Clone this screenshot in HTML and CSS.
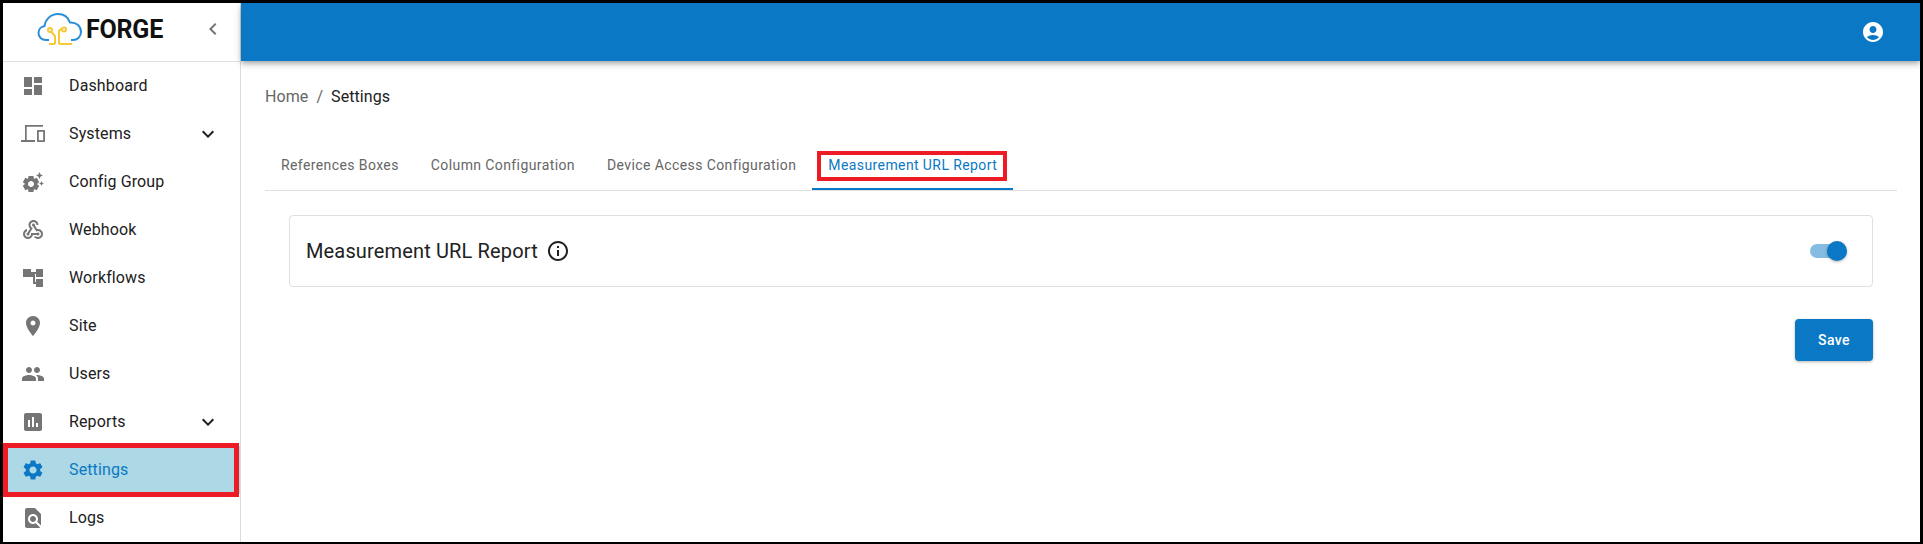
FILE: index.html
```html
<!DOCTYPE html>
<html lang="en">
<head>
<meta charset="utf-8">
<title>Forge Settings</title>
<link rel="stylesheet" href="styles.css">
</head>
<body>
<div class="frame">
  <aside class="sidebar">
    <div class="brand">
      <div class="logo">
        <svg class="logo-mark" viewBox="35 10 50 38" width="50" height="38">
          <path class="cloud" d="M49 40H46C41.500 40 38.500 37 38.500 33C38.500 29.500 41 26.500 44.500 26C45.500 19 51 14 58 14C63.500 14 68 17 70 22.500C76 22 81 26 81 32C81 36.500 77.500 40 73 40H71"/>
          <path class="circuit" d="M55 44V36L51.500 32M59 44V31l2-2h1M49 44H55M59 44H72"/>
          <circle class="circuit" cx="50" cy="30" r="2"/>
          <circle class="circuit" cx="64" cy="29.500" r="2"/>
        </svg>
        <span class="logo-text">FORGE</span>
      </div>
      <svg class="icon collapse" viewBox="0 0 24 24"><path d="M15.410 7.410 14 6l-6 6 6 6 1.410-1.410L10.830 12z"/></svg>
    </div>
    <nav class="menu">
      <a class="item"><svg class="icon" viewBox="0 0 24 24"><path d="M3 13h8V3H3v10zm0 8h8v-6H3v6zm10 0h8V11h-8v10zm0-18v6h8V3h-8z"/></svg><span class="label">Dashboard</span></a>
      <a class="item"><svg class="icon" viewBox="0 0 24 24"><path d="M4 3h18v1.700H5.700V18H14v2H0v-2h4V3z"/><path d="M17 8h6c.55 0 1 .45 1 1v10c0 .55-.45 1-1 1h-6c-.55 0-1-.45-1-1V9c0-.55.45-1 1-1zm.8 1.800v8.400h4.400V9.800z"/></svg><span class="label">Systems</span><svg class="icon chevron" viewBox="0 0 24 24"><path d="M16.590 8.590 12 13.170 7.410 8.590 6 10l6 6 6-6z"/></svg></a>
      <a class="item"><svg class="icon" viewBox="0 0 24 24"><path d="M17.410 6.590 15 5.500l2.410-1.090L18.500 2l1.090 2.410L22 5.500l-2.410 1.090L18.500 9l-1.090-2.410zm3.870 6.130L20.500 11l-.78 1.720-1.720.78 1.720.78.78 1.720.78-1.720L23 13.500l-1.720-.78zm-5.040 1.650 1.940 1.470-2.500 4.330-2.240-.94c-.2.13-.42.26-.64.37l-.3 2.400h-5l-.3-2.410c-.22-.11-.43-.23-.64-.37l-2.240.94-2.500-4.330 1.940-1.470c-.01-.11-.01-.24-.01-.37s0-.26.01-.38l-1.940-1.470 2.500-4.330 2.240.94c.2-.13.42-.26.64-.37L7.500 6h5l.3 2.410c.22.11.43.23.64.37l2.240-.94 2.500 4.330-1.940 1.470c.01.12.01.24.01.37s0 .24-.01.36zM13 14c0-1.660-1.340-3-3-3s-3 1.340-3 3 1.340 3 3 3 3-1.340 3-3z"/></svg><span class="label">Config Group</span></a>
      <a class="item"><svg class="icon" viewBox="0 0 24 24"><path d="M10 15h5.880c.27-.31.67-.5 1.120-.5.83 0 1.500.67 1.500 1.500s-.67 1.500-1.500 1.500c-.44 0-.84-.19-1.120-.5H11.900c-.46 2.280-2.480 4-4.900 4-2.760 0-5-2.240-5-5 0-2.420 1.720-4.440 4-4.900v2.070c-1.160.41-2 1.530-2 2.830 0 1.650 1.350 3 3 3s3-1.350 3-3v-1zm2.500-11c1.650 0 3 1.350 3 3h2c0-2.760-2.240-5-5-5s-5 2.240-5 5c0 1.430.6 2.710 1.550 3.620l-2.350 3.900c-.68.14-1.200.75-1.200 1.480 0 .83.67 1.500 1.500 1.500s1.500-.67 1.500-1.500c0-.16-.02-.31-.07-.45l3.380-5.630C10.490 9.610 9.500 8.420 9.500 7c0-1.650 1.350-3 3-3zm4.500 9c-.64 0-1.230.2-1.720.54l-3.050-5.070C11.530 8.350 11 7.740 11 7c0-.83.67-1.500 1.500-1.500S14 6.170 14 7c0 .15-.02.29-.06.43l2.190 3.650c.28-.05.57-.08.87-.08 2.760 0 5 2.240 5 5s-2.240 5-5 5c-1.850 0-3.470-1.010-4.330-2.500h2.670c.48.32 1.050.5 1.660.5 1.650 0 3-1.350 3-3s-1.350-3-3-3z"/></svg><span class="label">Webhook</span></a>
      <a class="item"><svg class="icon" viewBox="0 0 24 24"><path d="M2 3h8v3h5V3h7v8h-7V8h-1v8h1v-3h7v8h-7v-3h-3V11h-2v0H2V3z"/></svg><span class="label">Workflows</span></a>
      <a class="item"><svg class="icon" viewBox="0 0 24 24"><path d="M12 2C8.130 2 5 5.130 5 9c0 5.250 7 13 7 13s7-7.750 7-13c0-3.870-3.130-7-7-7zm0 9.500c-1.380 0-2.500-1.120-2.500-2.500s1.120-2.500 2.500-2.500 2.500 1.120 2.500 2.500-1.120 2.500-2.500 2.500z"/></svg><span class="label">Site</span></a>
      <a class="item"><svg class="icon" viewBox="0 0 24 24"><path d="M16 11c1.660 0 2.990-1.340 2.990-3S17.660 5 16 5c-1.660 0-3 1.340-3 3s1.340 3 3 3zm-8 0c1.660 0 2.990-1.340 2.990-3S9.660 5 8 5C6.340 5 5 6.340 5 8s1.340 3 3 3zm0 2c-2.330 0-7 1.170-7 3.500V19h14v-2.500c0-2.330-4.670-3.500-7-3.500zm8 0c-.29 0-.62.02-.97.05 1.160.84 1.970 1.970 1.970 3.450V19h6v-2.500c0-2.330-4.670-3.500-7-3.500z"/></svg><span class="label">Users</span></a>
      <a class="item"><svg class="icon" viewBox="0 0 24 24"><path d="M19 3H5c-1.100 0-2 .9-2 2v14c0 1.100.9 2 2 2h14c1.100 0 2-.9 2-2V5c0-1.100-.9-2-2-2zM9 17H7v-7h2v7zm4 0h-2V7h2v10zm4 0h-2v-4h2v4z"/></svg><span class="label">Reports</span><svg class="icon chevron" viewBox="0 0 24 24"><path d="M16.590 8.590 12 13.170 7.410 8.590 6 10l6 6 6-6z"/></svg></a>
      <a class="item active"><svg class="icon" viewBox="0 0 24 24"><path d="M19.140 12.940c.04-.3.06-.61.06-.94 0-.32-.02-.64-.07-.94l2.030-1.580c.18-.14.23-.41.12-.61l-1.920-3.320c-.12-.22-.37-.29-.59-.22l-2.390.96c-.5-.38-1.030-.7-1.620-.94l-.36-2.540c-.04-.24-.24-.41-.48-.41h-3.840c-.24 0-.43.17-.47.41l-.36 2.540c-.59.24-1.130.57-1.620.94l-2.390-.96c-.22-.08-.47 0-.59.22L2.740 8.870c-.12.21-.08.47.12.61l2.030 1.580c-.05.3-.09.63-.09.94s.02.64.07.94l-2.030 1.580c-.18.14-.23.41-.12.61l1.920 3.320c.12.22.37.29.59.22l2.390-.96c.5.38 1.030.7 1.620.94l.36 2.540c.05.24.24.41.48.41h3.840c.24 0 .44-.17.47-.41l.36-2.540c.59-.24 1.130-.56 1.620-.94l2.390.96c.22.08.47 0 .59-.22l1.920-3.320c.12-.22.07-.47-.12-.61l-2.010-1.580zM12 15.600c-1.980 0-3.600-1.620-3.600-3.600s1.620-3.600 3.600-3.600 3.600 1.620 3.600 3.600-1.620 3.600-3.600 3.600z"/></svg><span class="label">Settings</span></a>
      <a class="item"><svg class="icon" viewBox="0 0 24 24"><path d="M20 19.590V8l-6-6H6c-1.100 0-1.990.9-1.990 2L4 20c0 1.100.89 2 1.990 2H18c.45 0 .85-.15 1.190-.4l-4.430-4.430c-.8.52-1.740.83-2.760.83-2.760 0-5-2.240-5-5s2.240-5 5-5 5 2.240 5 5c0 1.020-.31 1.960-.83 2.750L20 19.590zM9 13c0 1.660 1.340 3 3 3s3-1.340 3-3-1.340-3-3-3-3 1.340-3 3z"/></svg><span class="label">Logs</span></a>
    </nav>
  </aside>
  <div class="main">
    <header class="topbar">
      <svg class="icon account" viewBox="0 0 24 24"><path d="M12 2C6.480 2 2 6.480 2 12s4.480 10 10 10 10-4.480 10-10S17.520 2 12 2zm0 4c1.930 0 3.500 1.570 3.500 3.500S13.930 13 12 13s-3.500-1.570-3.500-3.500S10.070 6 12 6zm0 14c-2.030 0-4.430-.82-6.140-2.880C7.550 15.800 9.680 15 12 15s4.450.8 6.140 2.120C16.430 19.180 14.030 20 12 20z"/></svg>
    </header>
    <div class="content">
      <div class="crumbs"><span class="crumb-link">Home</span><span class="crumb-sep">/</span><span class="crumb-current">Settings</span></div>
      <div class="tabs">
        <div class="tab">References Boxes</div>
        <div class="tab">Column Configuration</div>
        <div class="tab">Device Access Configuration</div>
        <div class="tab selected">Measurement URL Report</div>
      </div>
      <div class="panel-wrap">
        <section class="card">
          <div class="card-title"><span>Measurement URL Report</span>
            <svg class="icon info" viewBox="0 0 24 24"><path d="M11 7h2v2h-2zm0 4h2v6h-2zm1-9C6.480 2 2 6.480 2 12s4.480 10 10 10 10-4.480 10-10S17.520 2 12 2zm0 18c-4.410 0-8-3.590-8-8s3.590-8 8-8 8 3.590 8 8-3.590 8-8 8z"/></svg>
          </div>
          <div class="switch"><span class="track"></span><span class="thumb"></span></div>
        </section>
        <div class="actions"><button class="save">Save</button></div>
      </div>
    </div>
  </div>
</div>
</body>
</html>
```

FILE: styles.css
```css
*, *::before, *::after { box-sizing: border-box; }
html, body { margin: 0; padding: 0; }
body {
  font-family: Roboto, "Liberation Sans", sans-serif;
  background: #fff;
  color: #212121;
}
.frame {
  width: 1923px;
  height: 544px;
  border: solid #000;
  border-width: 3px 3px 2px 3px;
  display: flex;
  overflow: hidden;
  background: #fff;
}
.sidebar {
  width: 238px;
  flex: none;
  border-right: 1px solid #dcdcdc;
  display: flex;
  flex-direction: column;
}
.brand {
  height: 59px;
  flex: none;
  border-bottom: 1px solid #e0e0e0;
  display: flex;
  align-items: center;
  padding: 0 15px 6px 32px;
  justify-content: space-between;
}
.logo { display: flex; align-items: center; }
.logo-mark { display: block; }
.cloud { fill: none; stroke: #2b8fd6; stroke-width: 2; }
.circuit { fill: none; stroke: #f7c936; stroke-width: 2; }
.logo-text {
  font-size: 25px;
  font-weight: 700;
  letter-spacing: -.2px;
  color: #111;
  line-height: 1;
  margin-left: 1px;
}
.icon { width: 24px; height: 24px; fill: #757575; display: block; flex: none; }
.menu { display: flex; flex-direction: column; }
.item {
  height: 48px;
  flex: none;
  display: flex;
  align-items: center;
  padding: 0 20px 0 18px;
  font-size: 16px;
  letter-spacing: .13px;
  color: #212121;
  position: relative;
}
.label { margin-left: 24px; flex: 1; padding-bottom: 2px; }
.chevron { fill: #212121; }
.item.active { background: #add8e6; color: #0a78c4; }
.item.active .icon { fill: #0a78c4; }
.item.active::after {
  content: "";
  position: absolute;
  left: 0;
  right: 1px;
  top: -3px;
  bottom: -3px;
  border: 5px solid #ed1c24;
}
.main { flex: 1; min-width: 0; display: flex; flex-direction: column; }
.topbar {
  height: 58px;
  flex: none;
  background: #0a78c4;
  display: flex;
  align-items: center;
  justify-content: flex-end;
  padding-right: 35px;
  box-shadow: 0 2px 4px -1px rgba(0,0,0,.2), 0 4px 5px rgba(0,0,0,.14), 0 1px 10px rgba(0,0,0,.12);
}
.account { fill: #fff; }
.content { flex: 1; padding: 24px 23px 0 24px; }
.crumbs { display: flex; align-items: center; font-size: 16px; letter-spacing: .08px; line-height: 24px; height: 24px; }
.crumb-link { color: #666; }
.crumb-sep { color: #666; margin: 0 8px; }
.crumb-current { color: #212121; }
.tabs {
  display: flex;
  margin-top: 33px;
  height: 49px;
  border-bottom: 1px solid #e0e0e0;
}
.tab {
  height: 48px;
  padding: 0 16px 2px;
  display: flex;
  align-items: center;
  font-size: 14px;
  letter-spacing: .4px;
  color: #666;
  position: relative;
}
.tab.selected { color: #0a78c4; border-bottom: 2px solid #0a78c4; padding-bottom: 0; }
.tab.selected::after {
  content: "";
  position: absolute;
  left: 5px;
  right: 6px;
  top: 9px;
  height: 30px;
  border: 4px solid #ed1c24;
}
.panel-wrap { padding: 24px 24px 0 24px; }
.card {
  height: 72px;
  border: 1px solid #e0e0e0;
  border-radius: 4px;
  display: flex;
  align-items: center;
  justify-content: space-between;
  padding: 0 25px 0 16px;
}
.card-title { display: flex; align-items: center; gap: 8px; font-size: 20px; letter-spacing: .15px; color: #212121; }
.info { fill: #212121; }
.switch { position: relative; width: 37px; height: 20px; }
.track {
  position: absolute;
  left: 0;
  right: 2px;
  top: 3px;
  height: 14px;
  border-radius: 7px;
  background: #85bce1;
}
.thumb {
  position: absolute;
  right: 0;
  top: 0;
  width: 20px;
  height: 20px;
  border-radius: 50%;
  background: #0a78c4;
  box-shadow: 0 1px 3px rgba(0,0,0,.3);
}
.actions { display: flex; justify-content: flex-end; margin-top: 32px; }
.save {
  width: 78px;
  height: 42px;
  border: 0;
  border-radius: 4px;
  background: #0a78c4;
  color: #fff;
  font-family: inherit;
  font-size: 14px;
  font-weight: 500;
  letter-spacing: .4px;
  box-shadow: 0 1px 3px rgba(0,0,0,.3);
}
```
